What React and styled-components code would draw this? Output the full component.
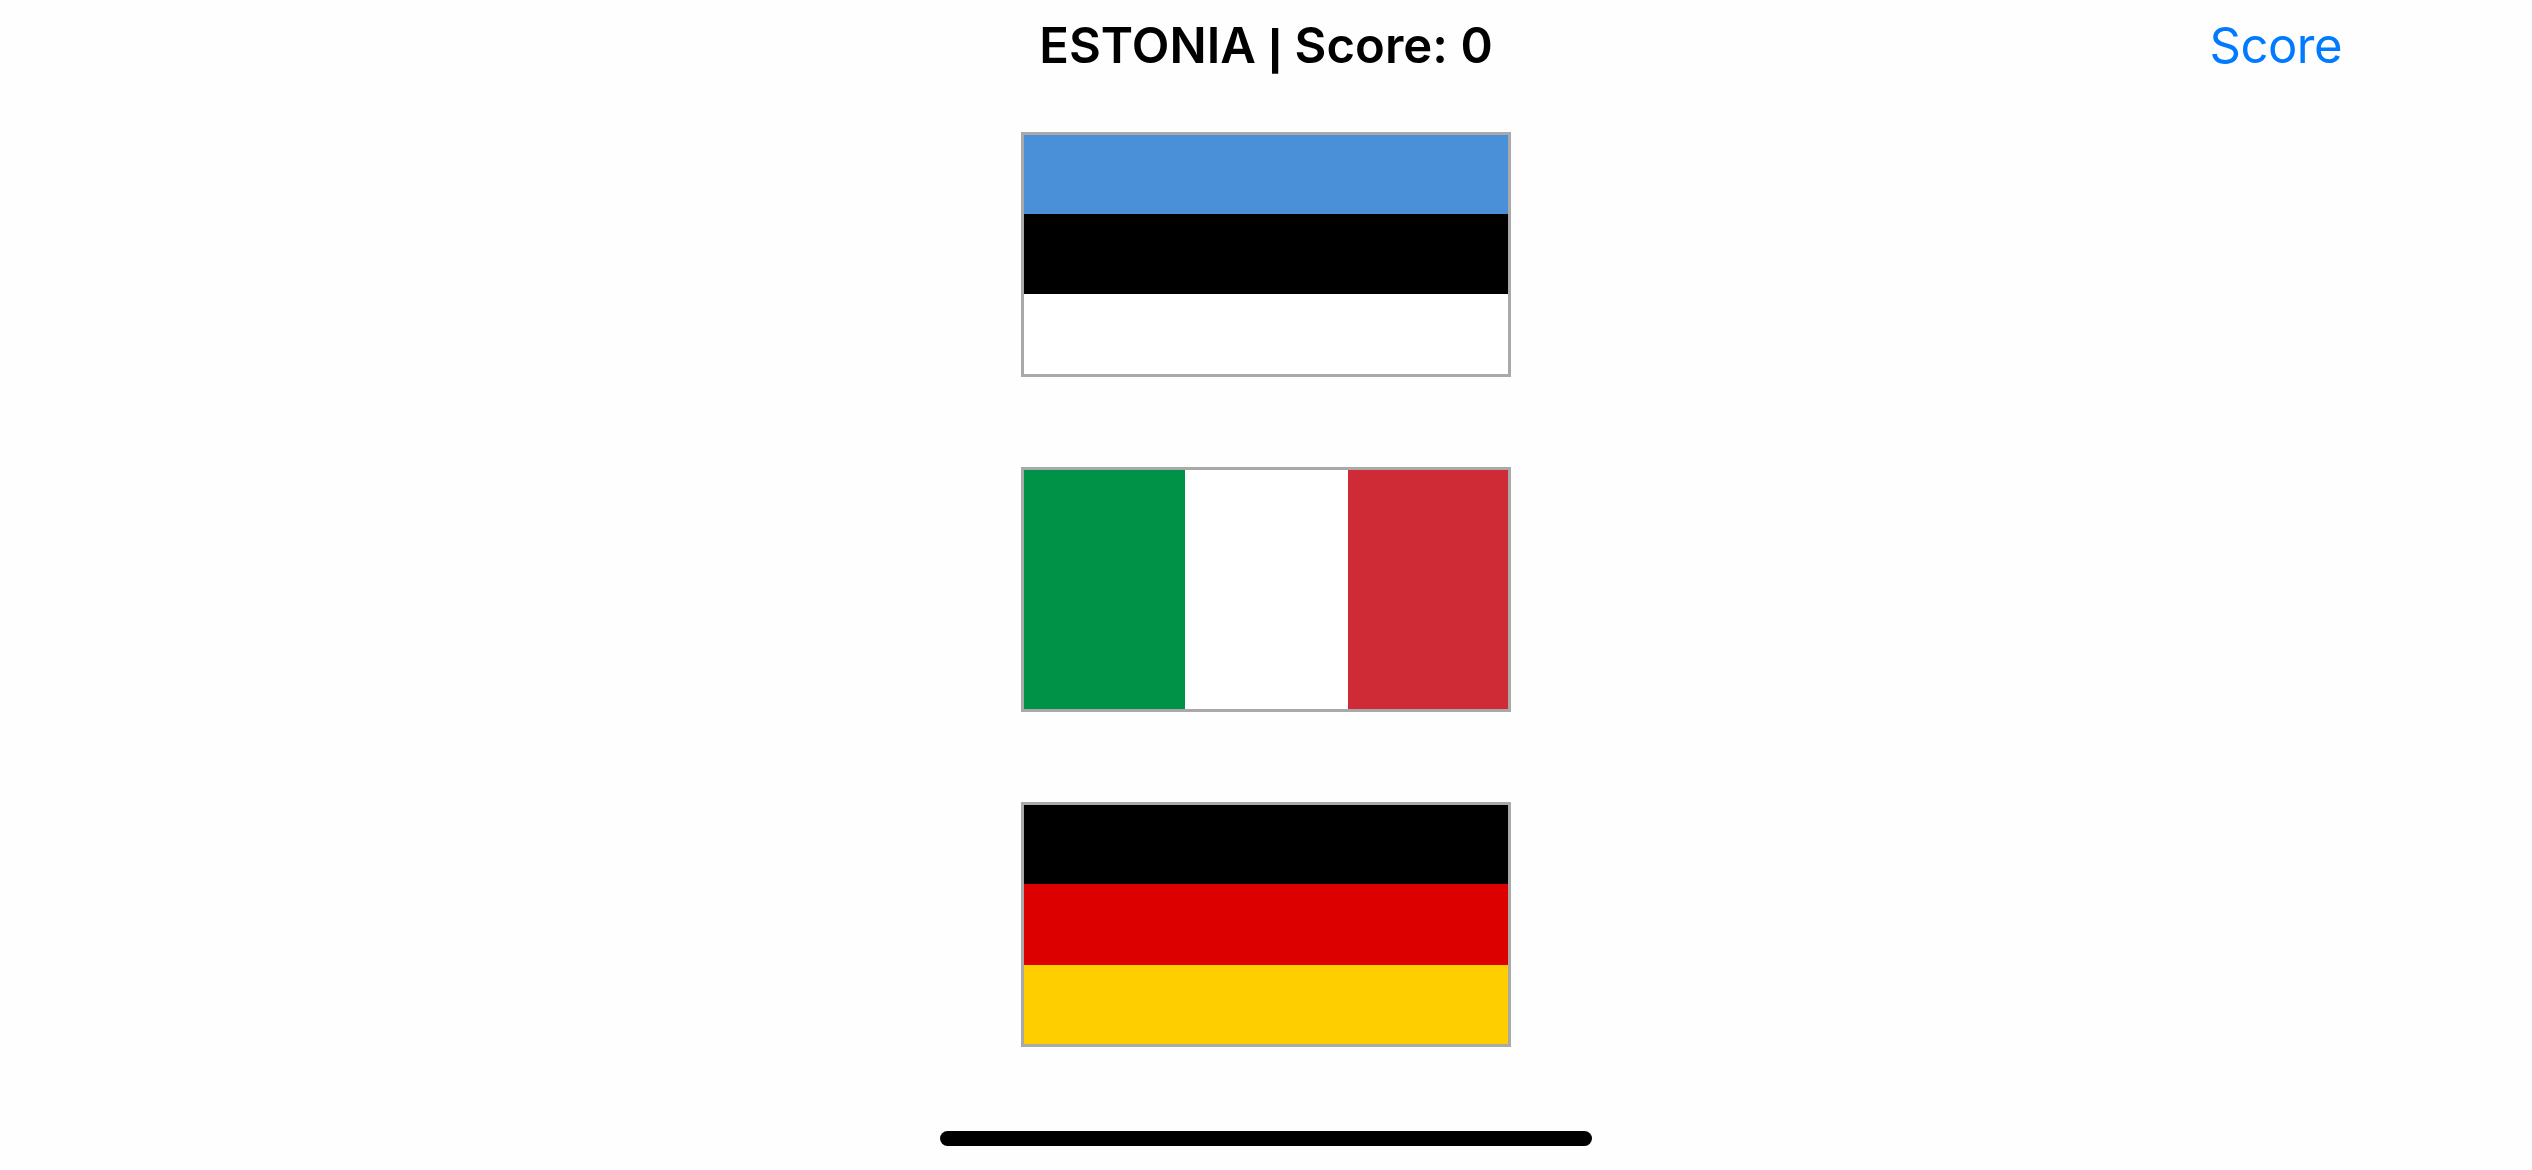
import React from "react";
import styled, { createGlobalStyle } from "styled-components";

// stripe sizes are not quite equal in the picture, so each one has its own weight
const flags = [
    {
        name: "Estonia",
        vertical: false,
        stripes: [["#4a90d9", 78.7], ["#000000", 80], ["#ffffff", 80.3]],
    },
    {
        name: "Italy",
        vertical: true,
        stripes: [["#009246", 160.5], ["#ffffff", 163], ["#ce2b37", 160.5]],
    },
    {
        name: "Germany",
        vertical: false,
        stripes: [["#000000", 78.5], ["#dd0000", 81.5], ["#ffce00", 79]],
    },
];

const GlobalStyle = createGlobalStyle`
html, body {
    margin: 0;
    padding: 0;
    background: #fefefe;
}
`;

const Page = styled.div`
width: 2532px;
height: 1170px;
overflow: hidden;
display: flex;
flex-direction: column;
align-items: center;
background: #fefefe;
font-family: Inter, "Liberation Sans", sans-serif;
`;

const NavBar = styled.header`
width: 100%;
height: 90px;
margin-bottom: 42px;
padding: 0 190px;
box-sizing: border-box;
display: grid;
grid-template-columns: 1fr auto 1fr;
align-items: center;
`;

const Title = styled.h1`
grid-column: 2;
margin: 0;
font-size: 49px;
font-weight: 600;
letter-spacing: 0.05px;
color: #000000;
white-space: nowrap;
`;

const Pipe = styled.span`
font-family: "Liberation Sans", sans-serif;
font-weight: 700;
`;

const ScoreButton = styled.button`
grid-column: 3;
justify-self: end;
padding: 0;
border: none;
background: transparent;
font-family: inherit;
font-size: 49px;
font-weight: 400;
letter-spacing: -0.5px;
color: #007aff;
`;

const FlagList = styled.main`
display: flex;
flex-direction: column;
gap: 90px;
`;

const FlagButton = styled.button`
width: 490px;
height: 245px;
padding: 0;
box-sizing: border-box;
border: 3px solid #a9a9a9;
display: flex;
flex-direction: ${(props) => (props.$vertical ? "row" : "column")};
background: #ffffff;
`;

const Stripe = styled.span`
flex: ${(props) => props.$size} 0 0;
background: ${(props) => props.$color};
`;

const HomeBar = styled.div`
width: 652px;
height: 15px;
margin-top: 84px;
border-radius: 8px;
background: #000000;
`;

const App = () => {
    return (
        <Page>
            <GlobalStyle />
            <NavBar>
                <Title>ESTONIA <Pipe>|</Pipe> Score: 0</Title>
                <ScoreButton>Score</ScoreButton>
            </NavBar>

            <FlagList>
                {flags.map((flag) => (
                    <FlagButton key={flag.name} $vertical={flag.vertical} aria-label={flag.name}>
                        {flag.stripes.map(([color, size]) => (
                            <Stripe key={color} $color={color} $size={size} />
                        ))}
                    </FlagButton>
                ))}
            </FlagList>

            <HomeBar />
        </Page>
    );
};

export default App;
